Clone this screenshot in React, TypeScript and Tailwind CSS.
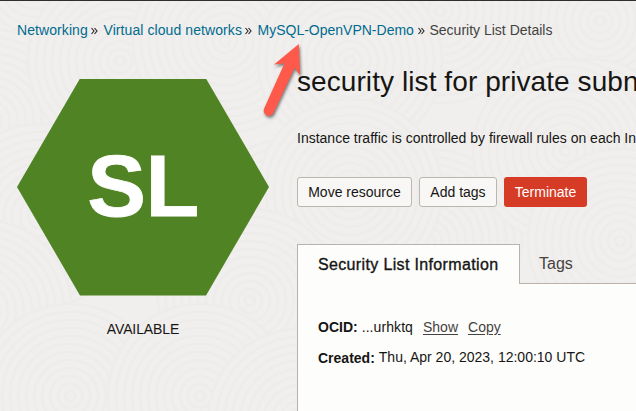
const rings = [
  [35, -20], [300, -60], [520, -30], [600, 20], [440, 10],
  [-10, 120], [120, 60], [225, 40], [350, 60], [590, 150],
  [40, 215], [290, 230], [430, 240], [350, 190], [565, 150],
  [-20, 310], [250, 300], [620, 240], [70, 395], [200, 395], [300, 420],
];
const radii = [92, 84, 76, 68, 60, 52, 44, 36, 28, 20, 12, 5];

function Texture() {
  return (
    <svg className="absolute inset-0 -z-10" width="636" height="411" aria-hidden="true">
      {rings.map(([x, y], i) => (
        <g key={i} fill="#f0efed" stroke="#edecea" strokeWidth="2.5">
          {radii.map((r) => <circle key={r} cx={x} cy={y} r={r} />)}
        </g>
      ))}
    </svg>
  );
}

function Separator() {
  return (
    <svg className="ml-[3px] mr-[6px] mt-[2px] shrink-0" width="7" height="8" viewBox="0 0 7 8" fill="none" stroke="#2b2927" strokeWidth="1.15">
      <path d="M.5 1 3 4 .5 7M3.5 1 6 4 3.5 7" />
    </svg>
  );
}

function Arrow() {
  return (
    <svg className="absolute left-[250px] top-[33px] drop-shadow-[1px_2px_1.5px_rgba(0,0,0,0.5)]" width="60" height="90" viewBox="250 34 60 90">
      <path fill="#ff594b" d="M298.8 44 300.2 75.3 294.6 67.7 273.7 112.6A5.2 5.2 0 0 1 264.1 108.6L284.4 63.4 274 64.6Z" />
    </svg>
  );
}

export default function App() {
  return (
    <div className="relative isolate h-[411px] w-[636px] overflow-hidden border-t border-[#312d2a] bg-[#f0efed] font-['Liberation_Sans',Arial,sans-serif] text-sm text-[#161513]">
      <Texture />
      <nav className="flex h-[58px] items-center whitespace-nowrap pl-[17px] text-[#006b8f]">
        <a className="w-[70.5px] tracking-[0.08px]">Networking</a><Separator />
        <a className="w-[138px] tracking-[0.08px]">Virtual cloud networks</a><Separator />
        <a className="w-[157px]">MySQL-OpenVPN-Demo</a><Separator />
        <span className="-ml-px text-[#45423f]">Security List Details</span>
      </nav>
      <main className="flex">
        <aside className="ml-[17px] flex w-[252px] shrink-0 flex-col items-center pt-[19.5px]">
          <div className="flex h-[217px] w-[252px] items-center justify-center bg-[#4f8323] [clip-path:polygon(25%_0,75%_0,100%_50%,75%_100%,25%_100%,0_50%)]">
            <span className="-mt-[3px] text-[88px] font-bold leading-none tracking-[-0.5px] text-white [-webkit-text-stroke:0.8px_white]">SL</span>
          </div>
          <p className="mt-[23.5px] leading-5 tracking-[-0.1px]">AVAILABLE</p>
        </aside>
        <section className="ml-[28px] min-w-0 flex-1 whitespace-nowrap">
          <h1 className="mt-[5px] text-[28px] leading-[36px] tracking-[0.08px]">security list for private subn</h1>
          <p className="mt-[28px] leading-5">Instance traffic is controlled by firewall rules on each In</p>
          <div className="mt-[29px] flex gap-[7px]">
            <button className="h-[30px] w-[115px] rounded-[3px] border border-[#bbb7b0] bg-[#f8f7f5]">Move resource</button>
            <button className="h-[30px] w-[78px] rounded-[3px] border border-[#bbb7b0] bg-[#f8f7f5]">Add tags</button>
            <button className="h-[30px] w-[83px] rounded-[3px] bg-[#d63b25] text-white">Terminate</button>
          </div>
          <div className="mt-[37px] flex h-10 text-base">
            <div className="w-[223px] border-x border-t border-[#b6b2ae] bg-[#fdfdfc] pl-5 pt-[8px] tracking-[0.35px] [-webkit-text-stroke:0.35px_#161513]">Security List Information</div>
            <div className="flex-1 border-b border-[#bbb2a9] pl-[19px] pt-[8px] text-[#45423f]">Tags</div>
          </div>
          <div className="h-[128px] border-l border-[#b6b2ae] bg-[#fdfdfc] pl-5 pt-[33px]">
            <p className="flex h-5 items-center"><b>OCID:</b><span className="ml-[4px] tracking-[0.08px]">...urhktq</span><a className="ml-[10px] text-[#45423f] underline underline-offset-2">Show</a><a className="ml-[10px] text-[#45423f] underline underline-offset-2">Copy</a></p>
            <p className="mt-[10px] flex h-5 items-center"><b className="mt-[2px]">Created:</b><span className="ml-[4px]">Thu, Apr 20, 2023, 12:00:10 UTC</span></p>
          </div>
        </section>
      </main>
      <Arrow />
    </div>
  );
}
